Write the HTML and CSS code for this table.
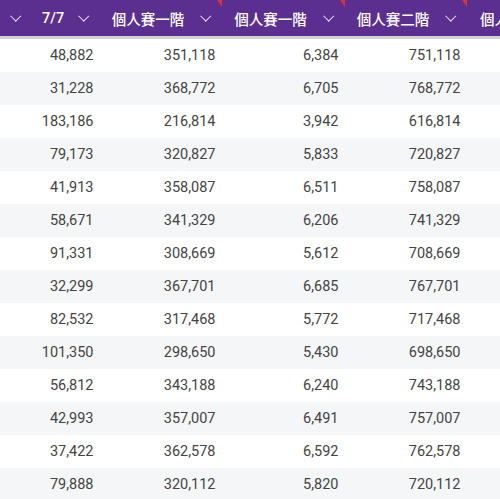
FILE: index.html
```html
<!DOCTYPE html>
<html lang="zh-Hant">
<head>
    <meta charset="UTF-8">
    <meta name="viewport" content="width=device-width, initial-scale=1.0">
    <title>個人賽積分</title>
    <link rel="stylesheet" href="styles.css">
</head>
<body>
    <div class="grid-wrap">
        <table class="grid">
            <colgroup>
                <col class="col-rank">
                <col class="col-date">
                <col class="col-num">
                <col class="col-num-wide">
                <col class="col-num">
                <col class="col-num">
            </colgroup>
            <thead>
                <tr>
                    <th><div class="head"><span class="chev chev-only"></span></div></th>
                    <th><div class="head"><span class="label">7/7</span><span class="chev"></span></div></th>
                    <th class="noted"><div class="head"><span class="label">個人賽一階</span><span class="chev"></span></div></th>
                    <th class="noted"><div class="head"><span class="label">個人賽一階</span><span class="chev"></span></div></th>
                    <th class="noted"><div class="head"><span class="label">個人賽二階</span><span class="chev"></span></div></th>
                    <th class="noted"><div class="head head-left"><span class="label">個人</span></div></th>
                </tr>
            </thead>
            <tbody id="rows"></tbody>
        </table>
    </div>

    <script>
        // 每列: 7/7, 一階, 一階(人數), 二階
        const dados = [
            [48882, 351118, 6384, 751118],
            [31228, 368772, 6705, 768772],
            [183186, 216814, 3942, 616814],
            [79173, 320827, 5833, 720827],
            [41913, 358087, 6511, 758087],
            [58671, 341329, 6206, 741329],
            [91331, 308669, 5612, 708669],
            [32299, 367701, 6685, 767701],
            [82532, 317468, 5772, 717468],
            [101350, 298650, 5430, 698650],
            [56812, 343188, 6240, 743188],
            [42993, 357007, 6491, 757007],
            [37422, 362578, 6592, 762578],
            [79888, 320112, 5820, 720112]
        ];

        const tbody = document.getElementById("rows");
        dados.forEach(linha => {
            const row = tbody.insertRow();
            row.innerHTML = `
                <td></td>
                ${linha.map(v => `<td>${v.toLocaleString("en-US")}</td>`).join("")}
                <td></td>
            `;
        });
    </script>
</body>
</html>
```

FILE: styles.css
```css
/* Estilos gerais */
body {
    margin: 0;
    background-color: #fff;
    font-family: Roboto, "Noto Sans CJK TC", sans-serif;
}

.grid-wrap {
    width: 500px;
    overflow: hidden;
}

.grid {
    table-layout: fixed;
    border-collapse: collapse;
    width: 589px;
}

.col-rank { width: 32px; }
.col-date { width: 68px; }
.col-num { width: 122px; }
.col-num-wide { width: 123px; }

.grid th {
    position: relative;
    height: 36px;
    padding: 0;
    background-color: #5b2f8f;
    color: #fff;
    font-family: Roboto, "Noto Sans CJK TC", sans-serif;
    font-size: 14.5px;
    font-weight: 500;
    border-bottom: 3px solid #d3d3d5;
    white-space: nowrap;
}

.head {
    display: flex;
    align-items: center;
    justify-content: flex-end;
    height: 36px;
    padding: 0 10px;
}

.head .label {
    flex: 1;
    text-align: center;
    overflow: hidden;
}

.head-left {
    padding-left: 13px;
}

.head-left .label {
    text-align: left;
}

.chev {
    width: 12px;
    height: 12px;
    margin-left: 14px;
    flex: none;
    position: relative;
}

.chev-only {
    margin-left: 0;
}

.chev::before {
    content: "";
    position: absolute;
    left: 2px;
    top: 0;
    width: 6.5px;
    height: 6.5px;
    border-right: 1.5px solid #e8e2f0;
    border-bottom: 1.5px solid #e8e2f0;
    transform: rotate(45deg);
}

/* marcador vermelho no canto */
.noted::after {
    content: "";
    position: absolute;
    top: 0;
    right: 0;
    width: 0;
    height: 0;
    border-top: 7px solid #d8323c;
    border-left: 5px solid transparent;
}

.grid td {
    height: 33px;
    padding: 0 6.5px 0 0;
    text-align: right;
    font-size: 14.5px;
    color: #444;
    white-space: nowrap;
}

.grid tbody tr:nth-child(even) td {
    background-color: #f5f6f8;
}
```
